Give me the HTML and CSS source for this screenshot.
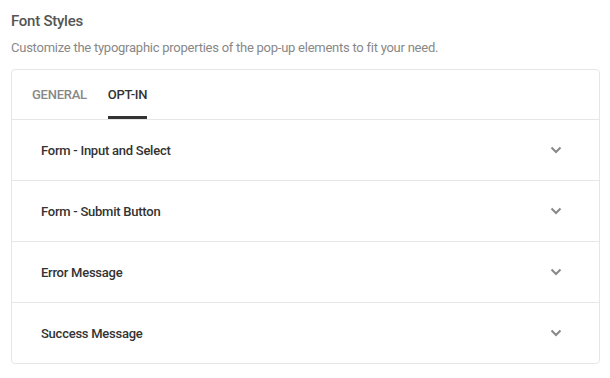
FILE: index.html
```html
<!DOCTYPE html>
<html>
<head>
<meta charset="utf-8">
<link rel="stylesheet" href="styles.css">
</head>
<body>
<div class="page">
  <h2 class="title">Font Styles</h2>
  <p class="desc">Customize the typographic properties of the pop-up elements to fit your need.</p>
  <div class="card">
    <div class="tabs">
      <span class="tab">GENERAL</span>
      <span class="tab active">OPT-IN</span>
    </div>
    <div class="row"><span class="label">Form - Input and Select</span><svg class="chev" width="12" height="8" viewBox="0 0 12 8"><path d="M1.5 1.5 L6 6 L10.5 1.5" fill="none" stroke="#888" stroke-width="2"/></svg></div>
    <div class="row"><span class="label">Form - Submit Button</span><svg class="chev" width="12" height="8" viewBox="0 0 12 8"><path d="M1.5 1.5 L6 6 L10.5 1.5" fill="none" stroke="#888" stroke-width="2"/></svg></div>
    <div class="row"><span class="label">Error Message</span><svg class="chev" width="12" height="8" viewBox="0 0 12 8"><path d="M1.5 1.5 L6 6 L10.5 1.5" fill="none" stroke="#888" stroke-width="2"/></svg></div>
    <div class="row"><span class="label">Success Message</span><svg class="chev" width="12" height="8" viewBox="0 0 12 8"><path d="M1.5 1.5 L6 6 L10.5 1.5" fill="none" stroke="#888" stroke-width="2"/></svg></div>
  </div>
</div>
</body>
</html>
```
FILE: styles.css
```css
html, body { margin: 0; padding: 0; background: #fff; }
body { font-family: Roboto, "Liberation Sans", sans-serif; letter-spacing: -0.25px; }
.page { padding: 11px 10px 0 11px; }
.title { margin: 0; font-size: 15px; font-weight: 500; color: #555; line-height: 20px; }
.desc { margin: 7px 0 0; font-size: 13px; color: #888; line-height: 20px; }
.card { margin-top: 11px; width: 587px; border: 1px solid #e6e6e6; border-radius: 4px; }
.tabs { display: flex; gap: 21px; padding: 0 20px; height: 49px; border-bottom: 1px solid #e6e6e6; }
.tab { display: flex; align-items: center; font-size: 13px; font-weight: 500; color: #888; border-bottom: 3px solid transparent; padding-top: 3px; }
.tab.active { color: #333; border-bottom-color: #333; }
.row { display: flex; align-items: center; justify-content: space-between; height: 60px; padding: 0 37px 0 29px; border-bottom: 1px solid #e6e6e6; }
.row:last-child { border-bottom: none; }
.label { font-size: 13px; font-weight: 500; color: #333; }
.chev { display: block; }
```
